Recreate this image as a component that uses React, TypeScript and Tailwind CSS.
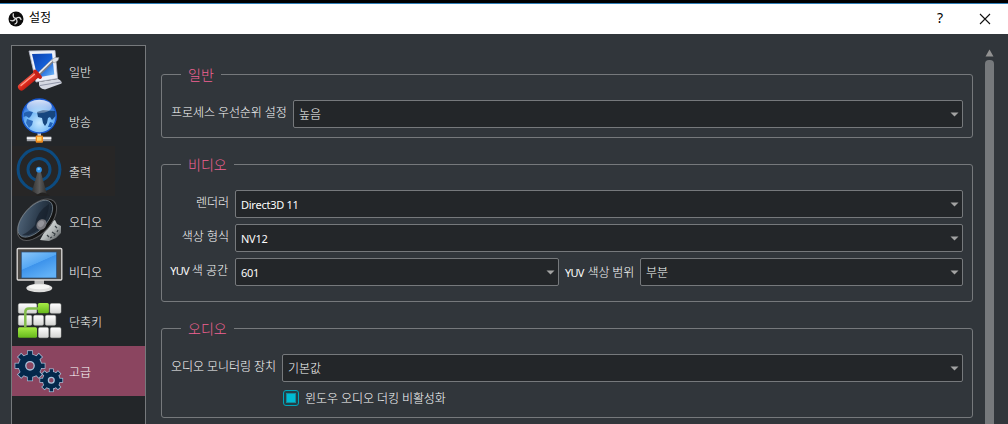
import React from 'react';

function Gear({ cx, cy, r, hole }: { cx: number; cy: number; r: number; hole: number }) {
  const teeth = [0, 45, 90, 135, 180, 225, 270, 315];
  const shape = (grow: number) => (
    <>
      <circle cx={cx} cy={cy} r={r * 0.77 + grow} />
      {teeth.map((a) => (
        <rect key={a} x={cx - r * 0.16 - grow} y={cy - r - grow} width={r * 0.32 + grow * 2} height={r * 0.4 + grow} transform={`rotate(${a} ${cx} ${cy})`} />
      ))}
    </>
  );
  return (
    <g>
      <g fill="#a9c3dc">{shape(0.6)}</g>
      <g fill="#04284b">{shape(-0.1)}</g>
      <circle cx={cx} cy={cy} r={hole} fill="#8b4560" stroke="#a9c3dc" strokeWidth="1.3" />
    </g>
  );
}

const icons: Record<string, React.ReactNode> = {
  general: (
    <>
      <defs>
        <linearGradient id="pc" x1="0" y1="0" x2="1" y2="1"><stop offset="0" stopColor="#0b3fae" /><stop offset=".55" stopColor="#1560d8" /><stop offset="1" stopColor="#7fc3fb" /></linearGradient>
        <linearGradient id="red" x1="0" y1="0" x2="1" y2="1"><stop offset="0" stopColor="#ff8a78" /><stop offset=".5" stopColor="#dc2a1c" /><stop offset="1" stopColor="#8e0f0a" /></linearGradient>
      </defs>
      <path d="M27 36 L46 33 Q50.500 35 49.500 37.500 L33 43.500 Q26 43 27 36Z" fill="#d5d8e2" />
      <path d="M28 39.500 L49 36" stroke="#9095a8" strokeWidth="1" />
      <path d="M17 5 L43 4.500 L45.500 32.500 L24 36Z" fill="#eef0f8" stroke="#b5b9c9" strokeWidth="0.800" />
      <path d="M20 8 L40 7.500 L42.300 28.500 L25.500 31.500Z" fill="url(#pc)" />
      <path d="M27 28 L41 14.500" stroke="#777c88" strokeWidth="3.400" />
      <path d="M26.500 27.500 L40.500 14" stroke="#eceef3" strokeWidth="1.700" />
      <path d="M39.500 14 L43 11.500 L47 11.500 L46 14.500 L42 17Z" fill="#dfe2e9" stroke="#888" strokeWidth=".5" />
      <path d="M9.500 41 L24 29" stroke="url(#red)" strokeWidth="7" strokeLinecap="round" />
      <path d="M23 25.500 L28 31" stroke="#c42018" strokeWidth="4" strokeLinecap="round" />
      <path d="M9 39.500 L22.500 28.300" stroke="#ff9e8c" strokeWidth="1.300" strokeLinecap="round" />
    </>
  ),
  stream: (
    <>
      <defs>
        <radialGradient id="globe" cx=".5" cy=".7" r=".65"><stop offset="0" stopColor="#c7e8ff" /><stop offset=".6" stopColor="#6db5f6" /><stop offset="1" stopColor="#1e5fd6" /></radialGradient>
        <linearGradient id="shine" x1="0" y1="0" x2="0" y2="1"><stop offset="0" stopColor="#fff" stopOpacity=".85" /><stop offset="1" stopColor="#fff" stopOpacity=".25" /></linearGradient>
      </defs>
      <rect x="25.500" y="36" width="3.500" height="5" fill="#c9cdd4" />
      <rect x="14.800" y="40.600" width="24.500" height="4.600" fill="#a0a3aa" />
      <rect x="14.800" y="41.300" width="24.500" height="1.800" fill="#f1f2f5" />
      <rect x="23.700" y="39.500" width="7.300" height="7.300" rx="1" fill="#ef8b1d" />
      <rect x="25" y="40.800" width="4.500" height="4" fill="#ffd36a" />
      <circle cx="27.300" cy="20" r="17" fill="url(#globe)" stroke="#1858cf" strokeWidth="1.300" />
      <path d="M12 17 Q16 14 21 16 L19 20 L17 22 L14 20 L11.500 21Z" fill="#2460b0" />
      <path d="M15 23 L21 25 L20 29 L17 32 L14 27Z" fill="#2f6dbd" />
      <path d="M25 16 L31 14 L43 15 L43.500 20 L40 24 L38 21 L36 22 L35 27 L33 30 L31 27 L30 22 L26 21Z" fill="#17467f" />
      <path d="M38 26 L41 27 L39 31 L36 31Z" fill="#2160b4" />
      <ellipse cx="27.300" cy="10.500" rx="12.500" ry="6.800" fill="url(#shine)" />
    </>
  ),
  output: (
    <>
      <defs>
        <linearGradient id="mast" x1="0" y1="0" x2="1" y2="0"><stop offset="0" stopColor="#343434" /><stop offset=".5" stopColor="#5b5b5b" /><stop offset="1" stopColor="#2d2d2d" /></linearGradient>
      </defs>
      <circle cx="27" cy="23.500" r="20.900" fill="none" stroke="#0c4b80" strokeWidth="3" />
      <circle cx="27" cy="23.500" r="11" fill="none" stroke="#0c4b80" strokeWidth="3" />
      <path d="M26.500 23 L20 45 L26 48.500 L35 48.500 L28 23Z" fill="url(#mast)" />
      <path d="M24 50 Q30 43 38 50Z" fill="#232221" />
      <circle cx="27" cy="23.700" r="2.900" fill="#2d8de2" />
      <circle cx="26.700" cy="23" r="1.300" fill="#79c5ff" />
    </>
  ),
  audio: (
    <>
      <defs>
        <linearGradient id="cone" x1="0" y1="0" x2="1" y2="1"><stop offset="0" stopColor="#566b80" /><stop offset=".55" stopColor="#2c3c4d" /><stop offset="1" stopColor="#141b24" /></linearGradient>
        <linearGradient id="metal" x1="0" y1="0" x2="1" y2="1"><stop offset="0" stopColor="#f0f2f2" /><stop offset=".55" stopColor="#b5baba" /><stop offset="1" stopColor="#3e4346" /></linearGradient>
      </defs>
      <path d="M38 26 L43 24 L45 28 L49 30 L49 37 L44 42 L37 45 L28 44Z" fill="url(#metal)" />
      <path d="M35 39 l2 2 M40 36 l3 2 l-1 2 M43 30 l2 2 M38 42 l2 -1 M46 34 l-1 2" stroke="#3b4246" strokeWidth="1.200" fill="none" />
      <ellipse cx="25" cy="23.700" rx="25" ry="13.800" transform="rotate(-48 25 23.700)" fill="#141414" stroke="#58595b" strokeWidth="1" />
      <ellipse cx="23.300" cy="22.700" rx="22.500" ry="11.600" transform="rotate(-48 23.300 22.700)" fill="url(#cone)" stroke="#75818c" strokeWidth=".8" />
      <path d="M37 8 Q24 16 23 29 Q17 36 10 39 Q21 41 31 28 Q37 18 37 8Z" fill="#141d28" opacity=".6" />
      <ellipse cx="29.500" cy="28.500" rx="5.800" ry="4.600" transform="rotate(-51 29.500 28.500)" fill="#77777d" />
      <ellipse cx="29" cy="27.800" rx="3.500" ry="2.700" transform="rotate(-51 29 27.800)" fill="#94949a" />
    </>
  ),
  video: (
    <>
      <defs>
        <linearGradient id="scr" x1="0" y1="0" x2=".6" y2="1"><stop offset="0" stopColor="#8bc6f8" /><stop offset=".5" stopColor="#56a8f4" /><stop offset=".52" stopColor="#3d93eb" /><stop offset="1" stopColor="#62b1f6" /></linearGradient>
      </defs>
      <rect x="22.500" y="33" width="9.500" height="8" fill="#b9b9b9" />
      <ellipse cx="27.300" cy="42" rx="13" ry="4.300" fill="#dededd" />
      <ellipse cx="27.300" cy="40.800" rx="10.500" ry="2.400" fill="#f5f5f4" />
      <rect x="5.200" y="2.500" width="44.600" height="31.500" rx="1" fill="#4b4844" stroke="#dedcda" strokeWidth="1.300" />
      <rect x="9.300" y="6" width="35.200" height="26" fill="url(#scr)" stroke="#2b4e77" strokeWidth=".7" />
    </>
  ),
  hotkeys: (
    <>
      <defs>
        <linearGradient id="kw" x1="0" y1="0" x2="0" y2="1"><stop offset="0" stopColor="#fff" /><stop offset="1" stopColor="#d3d4d2" /></linearGradient>
        <linearGradient id="kg" x1="0" y1="0" x2="0" y2="1"><stop offset="0" stopColor="#a6ec45" /><stop offset="1" stopColor="#66b91c" /></linearGradient>
      </defs>
      <g fill="url(#kw)" stroke="#b8bab6" strokeWidth=".5">
        <rect x="6.300" y="7.500" width="18.500" height="9.800" rx="1.500" />
        <rect x="38" y="7.500" width="11" height="9.800" rx="1.500" />
        <rect x="6.300" y="19.300" width="13.500" height="10" rx="1.500" />
        <rect x="21.500" y="19.300" width="10" height="10" rx="1.500" />
        <rect x="33.300" y="19.300" width="10.500" height="10" rx="1.500" />
        <rect x="26.500" y="31.400" width="10" height="10.300" rx="1.500" />
        <rect x="38.300" y="31.400" width="10.700" height="10.300" rx="1.500" />
      </g>
      <rect x="25.900" y="7" width="11" height="10.300" rx="1.500" fill="url(#kg)" />
      <rect x="6" y="31.300" width="19" height="10.500" rx="1.500" fill="url(#kg)" />
      <path d="M13.300 31 V16 Q13.300 12.500 17 12.500 H26" fill="none" stroke="#83bd4c" strokeWidth="2.500" />
    </>
  ),
  advanced: (
    <>
      <Gear cx={18} cy={19.800} r={14.800} hole={4.200} />
      <Gear cx={39.300} cy={34.300} r={11.200} hole={2.900} />
    </>
  ),
};

const nav = [
  { id: 'general', label: '일반' },
  { id: 'stream', label: '방송' },
  { id: 'output', label: '출력' },
  { id: 'audio', label: '오디오' },
  { id: 'video', label: '비디오' },
  { id: 'hotkeys', label: '단축키' },
  { id: 'advanced', label: '고급' },
];

function Combo({ value, className = 'flex-1' }: { value: string; className?: string }) {
  return (
    <div className={`flex h-7 items-center justify-between rounded-[2px] border border-[#76797c] bg-[#232629] pr-[3px] pl-[5px] ${className}`}>
      <span className="relative top-px whitespace-nowrap">{value}</span>
      <svg width="9" height="5" viewBox="0 0 9 5"><path d="M0.500 0.500 H8.500 L4.500 4.500Z" fill="#a3a3a3" /></svg>
    </div>
  );
}

function Label({ text, className = '' }: { text: string; className?: string }) {
  return <span className={`relative -top-px shrink-0 whitespace-nowrap ${className}`}>{text}</span>;
}

function Group({ title, className, children }: { title: string; className: string; children: React.ReactNode }) {
  return (
    <fieldset className={`w-[812px] rounded-[3px] border border-[#76797c] ${className}`}>
      <legend className="ml-[19px] h-[21px] px-[7px] text-[14px] leading-[22px] text-[#f06292]">{title}</legend>
      <div className="flex flex-col gap-1.5 pt-[15px] pr-[9px] pl-[9px]">{children}</div>
    </fieldset>
  );
}

const latin = 'pl-[4px] font-normal text-[11px] tracking-[-0.25px]';

export default function App() {
  return (
    <div className="flex h-[424px] w-[1008px] flex-col overflow-hidden bg-[#31363b] font-['Noto_Sans','Noto_Sans_CJK_KR',sans-serif] text-[12px] leading-4 font-light text-[#fcfcfc]">
      <div className="h-[3px] shrink-0 bg-black" />
      <header className="flex h-[31px] shrink-0 items-center border-t border-[#2f7fb8] bg-white pl-2 font-normal text-black">
        <svg width="16" height="16" viewBox="0 0 16 16">
          <circle cx="8" cy="8" r="7.500" fill="#0b0b0b" />
          <g fill="none" stroke="#e0e0e0" strokeWidth="1.300" strokeLinecap="round">
            <path d="M5.300 3 Q4.500 6.800 8 7.500" />
            <path d="M13 8.500 Q12 5 8 7.500" />
            <path d="M7 13 Q10.500 11.500 8 7.500" />
            <path d="M2.800 9.500 Q5 10.500 7 8.500" />
          </g>
        </svg>
        <span className="relative -top-px ml-[5px] flex-1">설정</span>
        <span className="relative -top-px mr-[36px] text-[14px]">?</span>
        <svg className="mr-[17px]" width="12" height="12" viewBox="0 0 12 12"><path d="M1 1 L11 11 M11 1 L1 11" stroke="#111" strokeWidth="1.100" /></svg>
      </header>
      <div className="flex min-h-0 flex-1">
        <nav className="mt-[11px] ml-[11px] w-[135px] shrink-0 border border-b-0 border-[#76797c] bg-[#232629]">
          {nav.map((n) => (
            <div key={n.id} className={`flex h-[50px] items-center ${n.id === 'advanced' ? 'bg-[#8b4560]' : ''}`}>
              <div className={`flex h-[50px] items-center ${n.id === 'output' ? 'w-[103px] bg-[#272626]' : ''}`}>
                <svg className="shrink-0" width="52" height="50" viewBox="0 0 52 50">{icons[n.id]}</svg>
                <span className="ml-[5px] pt-[3px] whitespace-nowrap">{n.label}</span>
              </div>
            </div>
          ))}
        </nav>
        <main className="ml-[15px] flex w-[812px] shrink-0 flex-col gap-4 pt-[30px]">
          <Group title="일반" className="h-[74px] shrink-0">
            <div className="flex items-center">
              <Label text="프로세스 우선순위 설정" className="w-[122px] tracking-[-0.07px]" />
              <Combo value="높음" />
            </div>
          </Group>
          <Group title="비디오" className="h-[148px] shrink-0">
            <div className="flex items-center">
              <Label text="렌더러" className="mr-[6px] w-[58px] text-right" />
              <Combo value="Direct3D 11" className={`flex-1 ${latin}`} />
            </div>
            <div className="flex items-center">
              <Label text="색상 형식" className="mr-[6px] w-[58px] text-right" />
              <Combo value="NV12" className={`flex-1 ${latin}`} />
            </div>
            <div className="flex items-center">
              <span className="relative -top-px mr-[7px] flex w-[57px] shrink-0 justify-end gap-[3px] whitespace-nowrap">
                <span className="text-[11px] font-normal tracking-[-0.8px]">YUV</span>
                <span>색 공간</span>
              </span>
              <Combo value="601" className={`w-[324px] ${latin}`} />
              <span className="relative top-px ml-[6px] flex w-[75px] gap-[4px] whitespace-nowrap">
                <span className="text-[11px] font-normal tracking-[-0.8px]">YUV</span>
                <span className="tracking-[-0.1px]">색상 범위</span>
              </span>
              <Combo value="부분" />
            </div>
          </Group>
          <Group title="오디오" className="h-[100px] shrink-0">
            <div className="flex items-center">
              <Label text="오디오 모니터링 장치" className="w-[111px] tracking-[-0.05px]" />
              <Combo value="기본값" />
            </div>
            <div className="ml-[112px] flex items-center pt-px">
              <span className="flex size-4 items-center justify-center rounded-[3px] border border-[#00a5bb] bg-[#243f47]">
                <span className="size-[10px] border border-[#178b9c] bg-[#00bcd4]" />
              </span>
              <span className="ml-[6px] pt-[2px] tracking-[-0.07px]">윈도우 오디오 더킹 비활성화</span>
            </div>
          </Group>
        </main>
        <div className="ml-[12px] flex w-[9px] shrink-0 flex-col pt-[15px]">
          <svg width="9" height="8" viewBox="0 0 9 8"><path d="M4.500 0.500 L8.500 7.500 H0.500Z" fill="#929292" /></svg>
          <div className="mt-[3px] flex-1 rounded-t-[4px] bg-[#76797c]" />
        </div>
      </div>
    </div>
  );
}
